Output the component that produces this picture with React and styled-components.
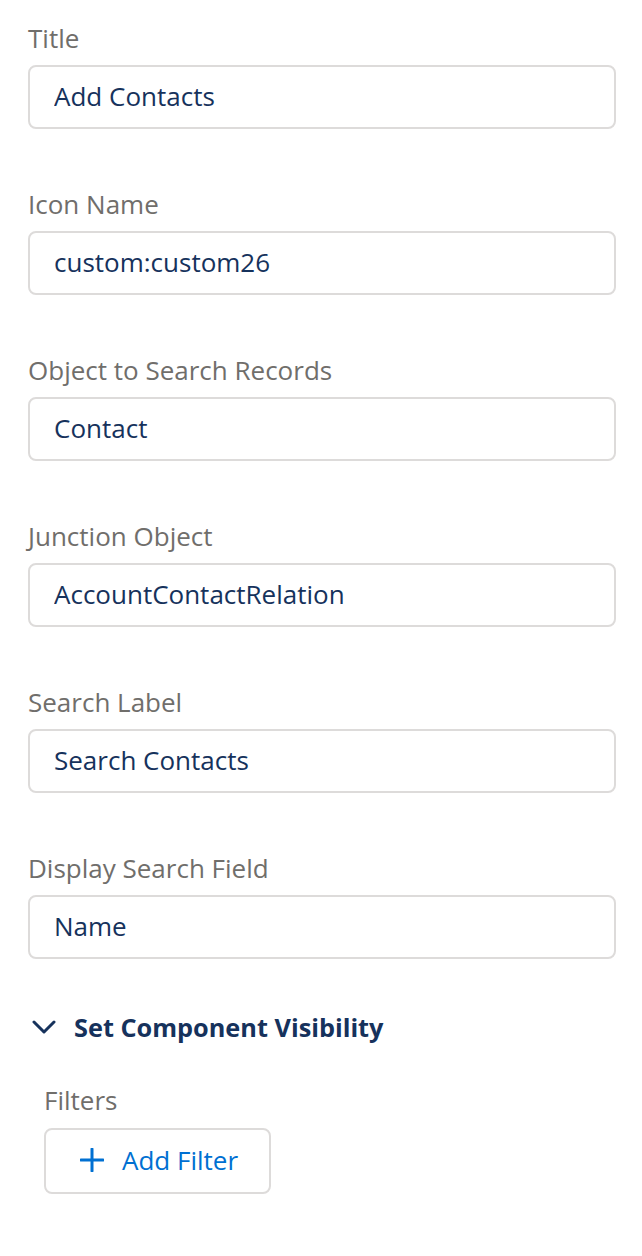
import styled, { createGlobalStyle } from "styled-components";

const GlobalStyle = createGlobalStyle`
  body {
    margin: 0;
    background: #ffffff;
    font-family: "Open Sans", "Liberation Sans", sans-serif;
  }
`;

const Panel = styled.div`
  width: 642px;
  padding: 20px 26px 0 28px;
  box-sizing: border-box;
`;

const Field = styled.div`
  display: flex;
  flex-direction: column;
  margin-bottom: 57px;
`;

const Label = styled.label`
  font-size: 26px;
  line-height: 36px;
  color: #706e6b;
  margin-bottom: ${(p) => (p.$tight ? 10 : 9)}px;
`;

const Input = styled.input`
  height: 64px;
  box-sizing: border-box;
  border: 2px solid #dddbda;
  border-radius: 8px;
  padding: 0 24px 2px;
  font-family: inherit;
  font-size: 26px;
  color: #16325c;
  background: #fff;
  outline: none;
`;

const SectionHeader = styled.div`
  display: flex;
  align-items: center;
  gap: 18px;
  height: 36px;
  margin-top: -7px;
  padding-left: 4px;
  font-size: 25.3px;
  font-weight: 700;
  color: #16325c;
`;

const SectionBody = styled.div`
  display: flex;
  flex-direction: column;
  align-items: flex-start;
  padding-left: 16px;
  margin-top: 37px;
`;

const FilterButton = styled.button`
  display: flex;
  align-items: center;
  gap: 18px;
  height: 66px;
  padding: 0 31px 2px 34px;
  border: 2px solid #dddbda;
  border-radius: 8px;
  background: #fff;
  font-family: inherit;
  font-size: 26px;
  color: #0070d2;
`;

const fields = [
  ["Title", "Add Contacts"],
  ["Icon Name", "custom:custom26"],
  ["Object to Search Records", "Contact"],
  ["Junction Object", "AccountContactRelation"],
  ["Search Label", "Search Contacts"],
  ["Display Search Field", "Name"],
];

export default function App() {
  return (
    <>
      <GlobalStyle />
      <Panel>
        {fields.map(([label, value]) => (
          <Field key={label}>
            <Label>{label}</Label>
            <Input defaultValue={value} />
          </Field>
        ))}
        <SectionHeader>
          <svg width="24" height="14" viewBox="0 0 24 14">
            <path d="M2 2l10 10L22 2" fill="none" stroke="#16325c" strokeWidth="3" strokeLinecap="round" strokeLinejoin="round" />
          </svg>
          Set Component Visibility
        </SectionHeader>
        <SectionBody>
          <Label $tight>Filters</Label>
          <FilterButton>
            <svg width="24" height="24" viewBox="0 0 24 24">
              <path d="M12 1v22M1 12h22" stroke="#0070d2" strokeWidth="3" strokeLinecap="round" />
            </svg>
            Add Filter
          </FilterButton>
        </SectionBody>
      </Panel>
    </>
  );
}
